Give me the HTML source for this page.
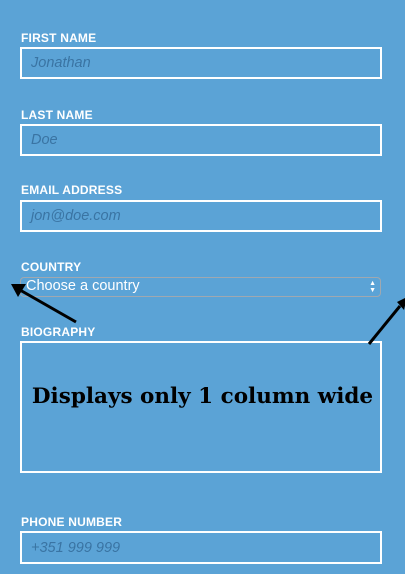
<!DOCTYPE html>
<html><head><style>
body{margin:0;width:405px;height:574px;background:#5ba3d6;font-family:"Liberation Sans",sans-serif;position:relative;overflow:hidden}
.l{position:absolute;left:21px;color:#fff;font-weight:bold;font-size:12px;letter-spacing:0.2px}
.i{position:absolute;left:20px;width:358px;border:2px solid #fff;box-sizing:content-box}
.p{position:absolute;left:9px;color:#3a74a3;font-style:italic;font-size:14.5px}
</style></head><body>
<div class="l" style="top:31px">FIRST NAME</div>
<div class="i" style="top:47px;height:28px"><span class="p" style="top:6px">Jonathan</span></div>
<div class="l" style="top:108px">LAST NAME</div>
<div class="i" style="top:124px;height:28px"><span class="p" style="top:6px">Doe</span></div>
<div class="l" style="top:183px">EMAIL ADDRESS</div>
<div class="i" style="top:200px;height:28px"><span class="p" style="top:6px">jon@doe.com</span></div>
<div class="l" style="top:260px">COUNTRY</div>
<div style="position:absolute;left:20px;top:277px;width:361px;height:20px;border:1px solid #a0a8b0;border-radius:4px;box-sizing:border-box">
<span style="position:absolute;left:5px;top:0px;color:#fff;font-size:14.5px">Choose a country</span>
<span style="position:absolute;right:4px;top:2px;color:#fff;font-size:7px;line-height:7px">▲<br>▼</span></div>
<div class="l" style="top:325px">BIOGRAPHY</div>
<div class="i" style="top:341px;height:128px"></div>
<div style="position:absolute;left:0;width:405px;top:384px;text-align:center;font-family:'DejaVu Serif',serif;font-weight:bold;font-size:21.5px;color:#000">Displays only 1 column wide</div>
<div class="l" style="top:515px">PHONE NUMBER</div>
<div class="i" style="top:531px;height:29px"><span class="p" style="top:7px">+351 999 999</span></div>
<svg style="position:absolute;left:0;top:0" width="405" height="574">
<line x1="76" y1="322" x2="20" y2="290" stroke="#000" stroke-width="3"/>
<polygon points="11,284 26,284 18,297" fill="#000"/>
<line x1="369" y1="344" x2="400" y2="306" stroke="#000" stroke-width="3"/>
<polygon points="407,297 397,302 404,310" fill="#000"/>
</svg>
</body></html>
